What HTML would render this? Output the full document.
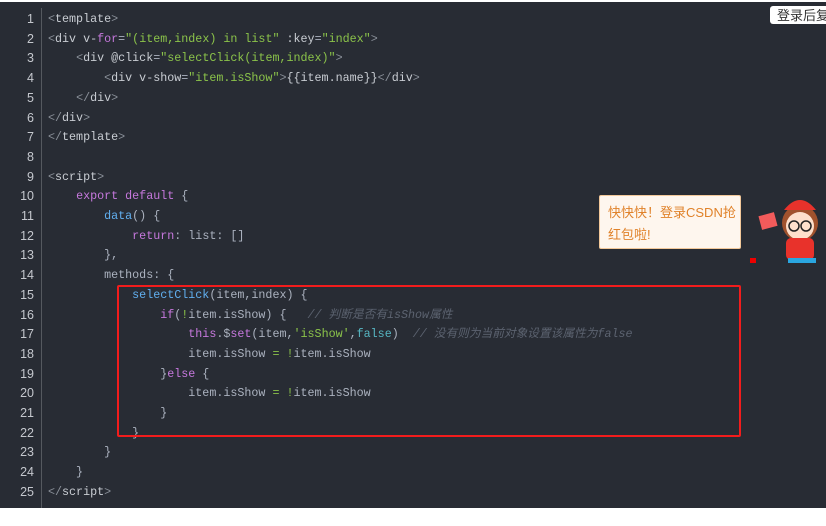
<!DOCTYPE html>
<html><head><meta charset="utf-8"><style>
body{margin:0;width:826px;height:526px;overflow:hidden;background:#282c34;position:relative;font-family:"Liberation Mono","Noto Sans CJK SC",monospace;}
.top{position:absolute;left:0;top:0;width:826px;height:2px;background:#fff}
.code{position:absolute;left:48px;top:10px;font-size:11.7px;line-height:19.7px;color:#abb2bf;white-space:pre}
.ln{position:absolute;left:0;top:10px;width:34px;text-align:right;font-size:12.5px;line-height:19.7px;color:#c5c8ce;font-family:"Liberation Sans",sans-serif;white-space:pre}
.sep{position:absolute;left:41px;top:8px;width:1px;height:500px;background:#55595f}
.t{color:#8a9099}.tn{color:#c9cdd3}.s{color:#8bc34a}.k{color:#c678dd}.f{color:#61afef}.c{color:#5c6370;font-style:italic}.g{color:#8bc34a}.b{color:#56b6c2}
.box{position:absolute;left:117px;top:285px;width:620px;height:148px;border:2px solid #f21c1c;border-radius:2px}
.bar{position:absolute;left:0;top:508px;width:826px;height:18px;background:#fff;font-family:"Liberation Sans","Noto Sans CJK SC",sans-serif;font-size:13px;color:#555}
.login{position:absolute;left:770px;top:6px;width:60px;height:18px;background:#fff;border-radius:3px;font-family:"Noto Sans CJK SC",sans-serif;font-size:13px;line-height:18px;padding-left:7px;color:#333}
.bubble{position:absolute;left:599px;top:195px;width:142px;height:54px;background:#fef6ee;border:1px solid #f2c89a;border-radius:2px;font-family:"Liberation Sans","Noto Sans CJK SC",sans-serif;font-size:13px;line-height:22px;color:#e0822a;padding:6px 0 0 8px;box-sizing:border-box}
</style></head><body>
<div class="top"></div>
<div class="ln">1
2
3
4
5
6
7
8
9
10
11
12
13
14
15
16
17
18
19
20
21
22
23
24
25</div>
<div class="sep"></div>
<div class="code"><span class="t">&lt;</span><span class="tn">template</span><span class="t">&gt;</span>
<span class="t">&lt;</span><span class="tn">div v-</span><span class="k">for</span>=<span class="s">"(item,index) in list"</span> <span class="tn">:key</span>=<span class="s">"index"</span><span class="t">&gt;</span>
    <span class="t">&lt;</span><span class="tn">div @click</span>=<span class="s">"selectClick(item,index)"</span><span class="t">&gt;</span>
        <span class="t">&lt;</span><span class="tn">div v-show</span>=<span class="s">"item.isShow"</span><span class="t">&gt;</span><span class="tn">{{item.name}}</span><span class="t">&lt;/</span><span class="tn">div</span><span class="t">&gt;</span>
    <span class="t">&lt;/</span><span class="tn">div</span><span class="t">&gt;</span>
<span class="t">&lt;/</span><span class="tn">div</span><span class="t">&gt;</span>
<span class="t">&lt;/</span><span class="tn">template</span><span class="t">&gt;</span>

<span class="t">&lt;</span><span class="tn">script</span><span class="t">&gt;</span>
    <span class="k">export default</span> {
        <span class="f">data</span>() {
            <span class="k">return</span>: list: []
        },
        methods: {
            <span class="f">selectClick</span>(item,index) {
                <span class="k">if</span>(<span class="g">!</span>item.isShow) {   <span class="c">// 判断是否有isShow属性</span>
                    <span class="k">this</span>.$<span class="k">set</span>(item,<span class="s">'isShow'</span>,<span class="b">false</span>)  <span class="c">// 没有则为当前对象设置该属性为false</span>
                    item.isShow <span class="g">=</span> <span class="g">!</span>item.isShow
                }<span class="k">else</span> {
                    item.isShow <span class="g">=</span> <span class="g">!</span>item.isShow
                }
            }
        }
    }
<span class="t">&lt;/</span><span class="tn">script</span><span class="t">&gt;</span></div>
<div class="box"></div>
<div class="login">登录后复</div>
<div class="bubble">快快快！登录CSDN抢<br>红包啦!</div>
<svg style="position:absolute;left:750px;top:178px" width="76" height="90">
<circle cx="50" cy="45" r="18" fill="#a0522d"/>
<circle cx="50" cy="48" r="14" fill="#fde0cc"/>
<path d="M34 32 Q50 12 66 32 Z" fill="#e8322b"/>
<circle cx="44" cy="48" r="5" fill="none" stroke="#222" stroke-width="1.5"/>
<circle cx="56" cy="48" r="5" fill="none" stroke="#222" stroke-width="1.5"/>
<rect x="36" y="60" width="28" height="22" rx="5" fill="#e8322b"/>
<rect x="38" y="80" width="28" height="5" fill="#2aa6e0"/>
<rect x="10" y="36" width="16" height="14" fill="#f25b5b" transform="rotate(-15 18 43)"/>
<rect x="0" y="80" width="6" height="5" fill="#e00"/>
</svg>
<div class="bar"></div>
</body></html>
